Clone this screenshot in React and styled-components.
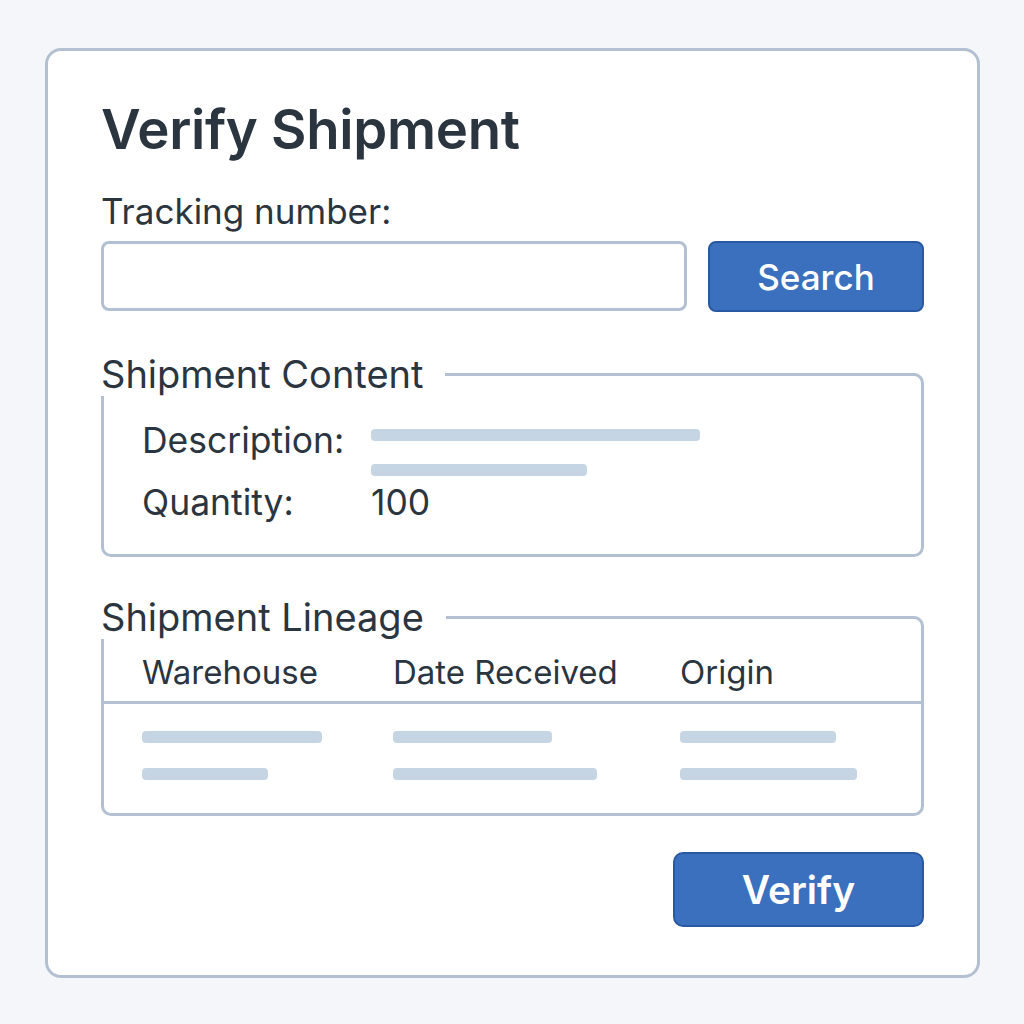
import React from "react";
import styled, { createGlobalStyle } from "styled-components";

const GlobalStyle = createGlobalStyle`
  html, body {
    margin: 0;
    padding: 0;
    background: #f4f6f9;
  }
  body {
    font-family: "Inter", "Liberation Sans", sans-serif;
    color: #2b3540;
  }
`;

const Page = styled.div`
  padding: 48px 44px 49px 45px;
`;

const Card = styled.div`
  width: 935px;
  box-sizing: border-box;
  background: #fff;
  border: 3px solid #b2c0d1;
  border-radius: 16px;
  padding: 50px 53px 48px 53px;
  display: flex;
  flex-direction: column;
`;

const Title = styled.h1`
  margin: 0;
  font-size: 54.5px;
  line-height: 56px;
  font-weight: 600;
  letter-spacing: -0.3px;
  color: #2b3540;
`;

const FieldLabel = styled.label`
  margin-top: 39px;
  font-size: 35px;
  line-height: 31px;
`;

const SearchRow = styled.div`
  margin-top: 14px;
  display: flex;
  gap: 21px;
`;

const TextInput = styled.input`
  flex: 1;
  height: 70px;
  box-sizing: border-box;
  border: 3px solid #b2c0d1;
  border-radius: 8px;
  background: #fff;
  outline: none;
  font-family: inherit;
  font-size: 30px;
  padding: 0 16px;
`;

const Button = styled.button`
  box-sizing: border-box;
  width: ${(p) => p.$w}px;
  height: ${(p) => p.$h}px;
  background: #3a70bd;
  border: 2px solid #2a59a3;
  border-radius: ${(p) => (p.$big ? 10 : 8)}px;
  color: #fff;
  font-family: inherit;
  font-size: ${(p) => (p.$big ? 39 : 35)}px;
  font-weight: ${(p) => (p.$big ? 600 : 500)};
  cursor: pointer;
`;

const Group = styled.section`
  position: relative;
  margin-top: ${(p) => p.$top}px;
  border: 3px solid #b2c0d1;
  border-radius: 10px;
`;

const Legend = styled.h2`
  position: absolute;
  top: -20px;
  left: -3px;
  margin: 0;
  padding: 0 22px 4px 0;
  background: #fff;
  font-size: 38px;
  line-height: 36px;
  font-weight: 400;
`;

const ContentGrid = styled.div`
  display: grid;
  grid-template-columns: 229px 1fr;
  row-gap: 7px;
  padding: 45px 38px 31px 38px;
  font-size: 35.5px;
  line-height: 40px;
`;

const Bars = styled.div`
  display: flex;
  flex-direction: column;
  gap: 23px;
  padding-top: 8px;
`;

const Bar = styled.div`
  width: ${(p) => p.$w}px;
  height: 12px;
  background: #c6d5e3;
  border-radius: 4px;
`;

const TableRow = styled.div`
  display: grid;
  grid-template-columns: 251px 287px 1fr;
  padding: 0 38px;
`;

const HeadRow = styled(TableRow)`
  padding-top: 33px;
  padding-bottom: 9px;
  border-bottom: 3px solid #b2c0d1;
  font-size: 33px;
  line-height: 40px;
`;

const BodyRows = styled.div`
  display: flex;
  flex-direction: column;
  gap: 25px;
  padding: 27px 0 33px 0;
`;

const Footer = styled.div`
  margin-top: 36px;
  display: flex;
  justify-content: flex-end;
`;

const rows = [
  [180, 159, 156],
  [126, 204, 177],
];

export default function App() {
  return (
    <Page>
      <GlobalStyle />
      <Card>
        <Title>Verify Shipment</Title>
        <FieldLabel htmlFor="tracking">Tracking number:</FieldLabel>
        <SearchRow>
          <TextInput id="tracking" type="text" />
          <Button $w={216} $h={71}>Search</Button>
        </SearchRow>

        <Group $top={61}>
          <Legend>Shipment Content</Legend>
          <ContentGrid>
            <span>Description:</span>
            <Bars>
              <Bar $w={329} />
              <Bar $w={216} />
            </Bars>
            <span>Quantity:</span>
            <span>100</span>
          </ContentGrid>
        </Group>

        <Group $top={59}>
          <Legend>Shipment Lineage</Legend>
          <HeadRow>
            <span>Warehouse</span>
            <span>Date Received</span>
            <span>Origin</span>
          </HeadRow>
          <BodyRows>
            {rows.map((r, i) => (
              <TableRow key={i}>
                {r.map((w, j) => (
                  <Bar key={j} $w={w} />
                ))}
              </TableRow>
            ))}
          </BodyRows>
        </Group>

        <Footer>
          <Button $w={251} $h={75} $big>Verify</Button>
        </Footer>
      </Card>
    </Page>
  );
}
